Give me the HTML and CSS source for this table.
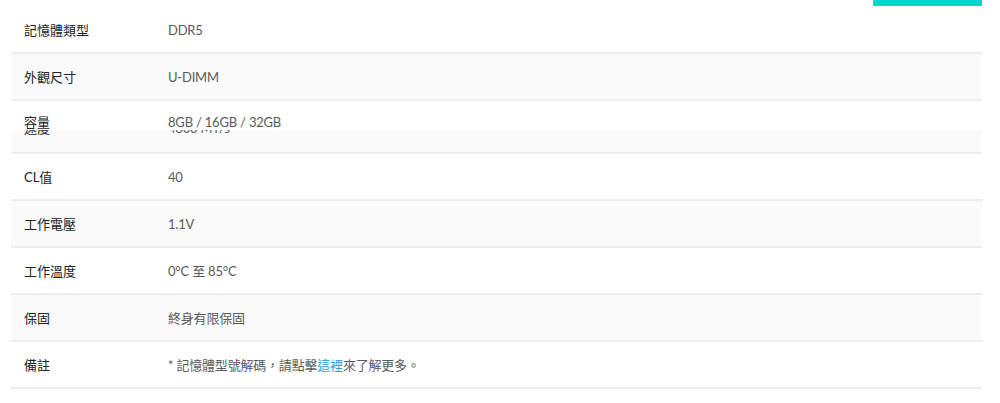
FILE: index.html
```html
<!DOCTYPE html>
<html lang="zh-Hant">
<head>
    <meta charset="UTF-8">
    <meta name="viewport" content="width=device-width, initial-scale=1.0">
    <title>規格</title>
    <link rel="stylesheet" href="styles.css">
</head>
<body>

    <div class="spec-wrap">
        <div class="tab-bar"></div>

        <div class="spec-table">
            <div class="row">
                <div class="label">記憶體類型</div>
                <div class="value">DDR5</div>
            </div>
            <div class="row alt">
                <div class="label">外觀尺寸</div>
                <div class="value">U-DIMM</div>
            </div>

            <!-- capacity row is sliding over the speed row -->
            <div class="row-stack">
                <div class="row alt under">
                    <div class="label">速度</div>
                    <div class="value">4800 MT/s</div>
                </div>
                <div class="row-overlay">
                    <div class="row plain">
                        <div class="label">容量</div>
                        <div class="value">8GB / 16GB / 32GB</div>
                    </div>
                </div>
            </div>

            <div class="row">
                <div class="label">CL值</div>
                <div class="value">40</div>
            </div>
            <div class="row alt">
                <div class="label">工作電壓</div>
                <div class="value">1.1V</div>
            </div>
            <div class="row">
                <div class="label">工作溫度</div>
                <div class="value">0°C 至 85°C</div>
            </div>
            <div class="row alt">
                <div class="label">保固</div>
                <div class="value">終身有限保固</div>
            </div>
            <div class="row">
                <div class="label">備註</div>
                <div class="value">* 記憶體型號解碼，請點擊<a href="#" class="link">這裡</a>來了解更多。</div>
            </div>
        </div>
    </div>

</body>
</html>
```

FILE: styles.css
```css
body {
    margin: 0;
    background: white;
    font-family: Lato, "Noto Sans CJK TC", sans-serif;
    font-size: 13px;
}
.spec-wrap {
    width: 971px;
    margin-left: 11px;
}
.tab-bar {
    width: 109px;
    height: 6px;
    margin-left: auto;
    margin-bottom: 1px;
    background: #00d9c9;
}
.row {
    display: flex;
    align-items: center;
    height: 45px;
    border-bottom: 2px solid #eeeeee;
    background: white;
}
.row.alt {
    background: #fafafa;
}
.row.plain {
    height: 41px;
    border-bottom: none;
}
.label {
    width: 144px;
    padding-left: 13px;
    color: #222;
}
.value {
    color: #5a5a5a;
    letter-spacing: -0.2px;
}
.link {
    color: #2b9fdc;
    text-decoration: none;
}
.row-stack {
    position: relative;
    padding-top: 6px;
}
.row.under .label,
.row.under .value {
    margin-bottom: 4px;
}
.row-overlay {
    position: absolute;
    top: 0;
    left: 0;
    right: 0;
    height: 29px;
    overflow: hidden;
    background: white;
}
```
